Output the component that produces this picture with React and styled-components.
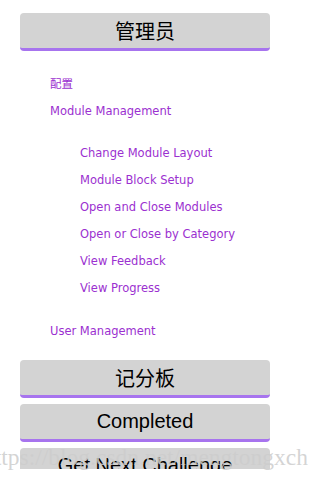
import React from "react";
import styled, { createGlobalStyle } from "styled-components";

const GlobalStyle = createGlobalStyle`
  html, body {
    margin: 0;
    padding: 0;
    background: #ffffff;
  }
  body {
    font-family: "Liberation Sans", "Noto Sans CJK SC", Arial, sans-serif;
  }
`;

const subItems = [
  "Change Module Layout",
  "Module Block Setup",
  "Open and Close Modules",
  "Open or Close by Category",
  "View Feedback",
  "View Progress",
];

export default function App() {
  return (
    <>
      <GlobalStyle />
      <Page>
        <Panel>
          <Button>管理员</Button>
          <Menu>
            <MenuLink>配置</MenuLink>
            <MenuLink>Module Management</MenuLink>
            <SubMenu>
              {subItems.map((item) => (
                <MenuLink key={item}>{item}</MenuLink>
              ))}
            </SubMenu>
            <MenuLink>User Management</MenuLink>
          </Menu>
          <ButtonGroup>
            <Button>记分板</Button>
            <Button>Completed</Button>
            <Button>Get Next Challenge</Button>
          </ButtonGroup>
        </Panel>
        <Watermark>https://blog.csdn.net/mengtongxch</Watermark>
      </Page>
    </>
  );
}

const Page = styled.div`
  position: relative;
  width: 320px;
  height: 481px;
  overflow: hidden;
`;

const Panel = styled.div`
  height: 456px;
  overflow: hidden;
  padding: 13px 0 0 20px;
  display: flex;
  flex-direction: column;
`;

const Button = styled.div`
  flex: none;
  width: 250px;
  height: 35px;
  box-sizing: content-box;
  background: #d3d3d3;
  border-bottom: 3px solid #a774ee;
  border-radius: 4px;
  display: flex;
  align-items: center;
  justify-content: center;
  color: #000;
  font-size: 20px;
  font-family: "Liberation Sans", "Noto Sans CJK SC", Arial, sans-serif;
`;

const Menu = styled.div`
  display: flex;
  flex-direction: column;
  padding: 20px 0 0 30px;
`;

const SubMenu = styled.div`
  display: flex;
  flex-direction: column;
  padding: 15px 0 16px 30px;
`;

const MenuLink = styled.a`
  display: block;
  height: 27px;
  line-height: 27px;
  color: #9b30d0;
  font-family: "DejaVu Sans", "Noto Sans CJK SC", sans-serif;
  font-size: 11.5px;
  white-space: nowrap;
  cursor: pointer;
`;

const ButtonGroup = styled.div`
  display: flex;
  flex-direction: column;
  gap: 6px;
  margin-top: 15px;
`;

const Watermark = styled.div`
  position: absolute;
  left: -17px;
  top: 444px;
  font-family: "Liberation Serif", serif;
  font-size: 23.5px;
  line-height: 27px;
  color: rgba(205, 205, 205, 0.85);
  white-space: nowrap;
  pointer-events: none;
`;
